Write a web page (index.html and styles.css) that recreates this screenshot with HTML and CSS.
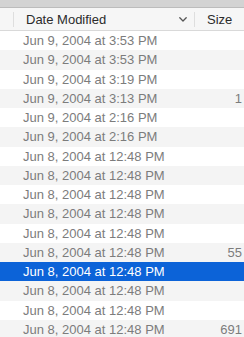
FILE: index.html
```html
<!DOCTYPE html>
<html lang="en">
<head>
    <meta charset="UTF-8">
    <meta name="viewport" content="width=device-width, initial-scale=1.0">
    <title>Date Modified</title>
    <link rel="stylesheet" href="styles.css">
</head>
<body>
    <div class="topbar"></div>

    <div class="header">
        <div class="col-lead"></div>
        <div class="col-date">
            <span>Date Modified</span>
            <svg class="chevron" width="8" height="5" viewBox="0 0 8 5">
                <polyline points="0.8,0.8 4,4 7.2,0.8" fill="none" stroke="#555" stroke-width="1.3" stroke-linecap="round" stroke-linejoin="round"/>
            </svg>
        </div>
        <div class="col-size">Size</div>
    </div>

    <div class="list">
        <div class="row"><span class="c-date">Jun 9, 2004 at 3:53 PM</span><span class="c-size"></span></div>
        <div class="row"><span class="c-date">Jun 9, 2004 at 3:53 PM</span><span class="c-size"></span></div>
        <div class="row"><span class="c-date">Jun 9, 2004 at 3:19 PM</span><span class="c-size"></span></div>
        <div class="row"><span class="c-date">Jun 9, 2004 at 3:13 PM</span><span class="c-size">1 KB</span></div>
        <div class="row"><span class="c-date">Jun 9, 2004 at 2:16 PM</span><span class="c-size"></span></div>
        <div class="row"><span class="c-date">Jun 9, 2004 at 2:16 PM</span><span class="c-size"></span></div>
        <div class="row"><span class="c-date">Jun 8, 2004 at 12:48 PM</span><span class="c-size"></span></div>
        <div class="row"><span class="c-date">Jun 8, 2004 at 12:48 PM</span><span class="c-size"></span></div>
        <div class="row"><span class="c-date">Jun 8, 2004 at 12:48 PM</span><span class="c-size"></span></div>
        <div class="row"><span class="c-date">Jun 8, 2004 at 12:48 PM</span><span class="c-size"></span></div>
        <div class="row"><span class="c-date">Jun 8, 2004 at 12:48 PM</span><span class="c-size"></span></div>
        <div class="row"><span class="c-date">Jun 8, 2004 at 12:48 PM</span><span class="c-size">55 KB</span></div>
        <div class="row selected"><span class="c-date">Jun 8, 2004 at 12:48 PM</span><span class="c-size"></span></div>
        <div class="row"><span class="c-date">Jun 8, 2004 at 12:48 PM</span><span class="c-size"></span></div>
        <div class="row"><span class="c-date">Jun 8, 2004 at 12:48 PM</span><span class="c-size"></span></div>
        <div class="row"><span class="c-date">Jun 8, 2004 at 12:48 PM</span><span class="c-size">691 KB</span></div>
    </div>
</body>
</html>
```

FILE: styles.css
```css
html, body {
    margin: 0;
    overflow: hidden;
}

body {
    font-family: "Liberation Sans", Arial, sans-serif;
    font-size: 13px;
    background-color: white;
    width: 300px;
}

.topbar {
    height: 7px;
    background-color: #d3d3d3;
    border-bottom: 1px solid #bcbcbc;
}

.header {
    display: flex;
    height: 23px;
    box-sizing: border-box;
    background-color: #f6f6f6;
    border-bottom: 1px solid #d9d9d9;
    color: #2b2b2b;
    align-items: center;
}

.col-lead {
    width: 13px;
    height: 15px;
    border-right: 1px solid #dedede;
}

.col-date {
    width: 180px;
    padding-left: 12px;
    padding-right: 7px;
    box-sizing: border-box;
    display: flex;
    align-items: center;
    justify-content: space-between;
}

.chevron {
    display: block;
    margin-top: 1px;
}

.col-size {
    height: 15px;
    line-height: 15px;
    border-left: 1px solid #dedede;
    padding-left: 12px;
}

.row {
    display: flex;
    height: 19.25px;
    line-height: 19.25px;
    color: #7c7c7c;
}

.row:nth-child(even) {
    background-color: #f4f4f4;
}

.row.selected {
    background-color: #0c63d8;
    color: white;
}

.c-date {
    width: 194px;
    padding-left: 23px;
    box-sizing: border-box;
}

.c-size {
    width: 69px;
    text-align: right;
}
```
